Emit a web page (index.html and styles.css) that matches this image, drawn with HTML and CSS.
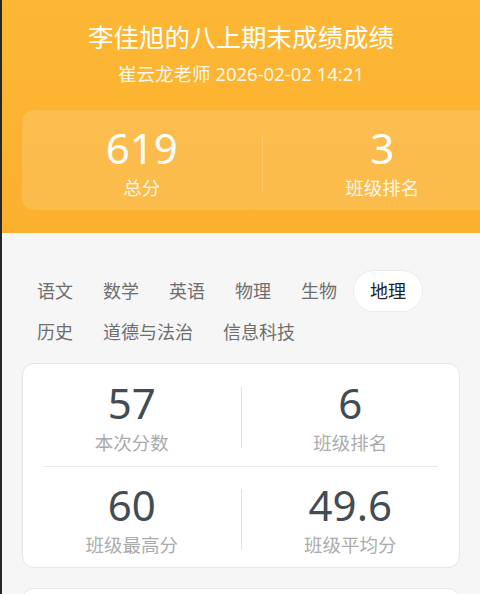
FILE: index.html
```html
<!DOCTYPE html>
<html lang="zh-CN">

<head>
    <meta charset="UTF-8">
    <meta name="viewport" content="width=device-width, initial-scale=1.0">
    <title>成绩详情</title>
    <link rel="stylesheet" href="styles.css">
</head>

<body>
    <div class="page">
        <div class="header">
            <h1 class="title">李佳旭的八上期末成绩成绩</h1>
            <p class="sub">崔云龙老师 2026-02-02 14:21</p>
            <div class="total">
                <div class="total-cell">
                    <div class="total-num">619</div>
                    <div class="total-label">总分</div>
                </div>
                <div class="total-line"></div>
                <div class="total-cell">
                    <div class="total-num">3</div>
                    <div class="total-label">班级排名</div>
                </div>
            </div>
        </div>

        <div class="main">
            <div class="tabs">
                <span class="tab">语文</span>
                <span class="tab">数学</span>
                <span class="tab">英语</span>
                <span class="tab">物理</span>
                <span class="tab">生物</span>
                <span class="tab active">地理</span>
                <span class="tab">历史</span>
                <span class="tab">道德与法治</span>
                <span class="tab">信息科技</span>
            </div>

            <div class="card">
                <div class="row">
                    <div class="cell">
                        <div class="num">57</div>
                        <div class="label">本次分数</div>
                    </div>
                    <div class="vline"></div>
                    <div class="cell">
                        <div class="num">6</div>
                        <div class="label">班级排名</div>
                    </div>
                </div>
                <div class="hline"></div>
                <div class="row">
                    <div class="cell">
                        <div class="num">60</div>
                        <div class="label">班级最高分</div>
                    </div>
                    <div class="vline"></div>
                    <div class="cell">
                        <div class="num">49.6</div>
                        <div class="label">班级平均分</div>
                    </div>
                </div>
            </div>

            <div class="card next"></div>
        </div>
    </div>
</body>

</html>
```

FILE: styles.css
```css
* {
    margin: 0;
    padding: 0;
    box-sizing: border-box;
}

body {
    font-family: "Noto Sans", "Noto Sans CJK SC", sans-serif;
    background: #f6f6f6;
    overflow: hidden;
    height: 594px;
}

.page {
    border-left: 2px solid #262626;
    height: 594px;
    overflow: hidden;
}

.header {
    background: linear-gradient(#fdb734, #fbb02e);
    padding: 20px 0 23px 20px;
    height: 233px;
    text-align: center;
    overflow: hidden;
}

.title {
    color: #fff;
    font-size: 25.5px;
    font-weight: 400;
    line-height: 35px;
    margin-right: 20px;
}

.sub {
    color: rgba(255, 255, 255, 0.92);
    font-size: 18.5px;
    line-height: 24px;
    margin-top: 7px;
    margin-right: 20px;
}

.total {
    display: flex;
    align-items: center;
    width: 480px;
    height: 100px;
    margin-top: 24px;
    padding-top: 5px;
    background: rgba(255, 255, 255, 0.14);
    border-radius: 12px;
}

.total-cell {
    flex: 1;
}

.total-num {
    color: #fff;
    font-size: 42px;
    line-height: 46px;
}

.total-label {
    color: rgba(255, 255, 255, 0.9);
    font-size: 18.5px;
    line-height: 24px;
    margin-top: 5px;
}

.total-line {
    width: 1px;
    height: 56px;
    background: rgba(255, 255, 255, 0.18);
}

.main {
    padding: 38px 20px 0;
}

.tabs {
    display: flex;
    flex-wrap: wrap;
    row-gap: 1px;
}

.tab {
    padding: 0 15px;
    height: 40px;
    line-height: 40px;
    font-size: 18px;
    color: #6e6e6e;
    border-radius: 20px;
}

.tab.active {
    margin-left: 2px;
    padding: 0 16px;
    background: #fff;
    color: #222;
    box-shadow: 0 0 0 1px #ececec;
}

.card {
    margin-top: 11px;
    background: #fff;
    border: 1px solid #e6e6e6;
    border-radius: 12px;
    text-align: center;
}

.row {
    display: flex;
    align-items: center;
    height: 102px;
    padding-top: 4px;
}

.row + .hline + .row {
    height: 100px;
}

.cell {
    flex: 1;
}

.num {
    color: #434b53;
    font-size: 42px;
    line-height: 46px;
}

.label {
    color: #ababab;
    font-size: 18.5px;
    line-height: 24px;
    margin-top: 5px;
}

.vline {
    width: 1px;
    height: 61px;
    background: #e4e4e4;
}

.hline {
    height: 1px;
    margin: 0 21px;
    background: #e8e8e8;
}

.card.next {
    margin-top: 20px;
    height: 40px;
}
```
